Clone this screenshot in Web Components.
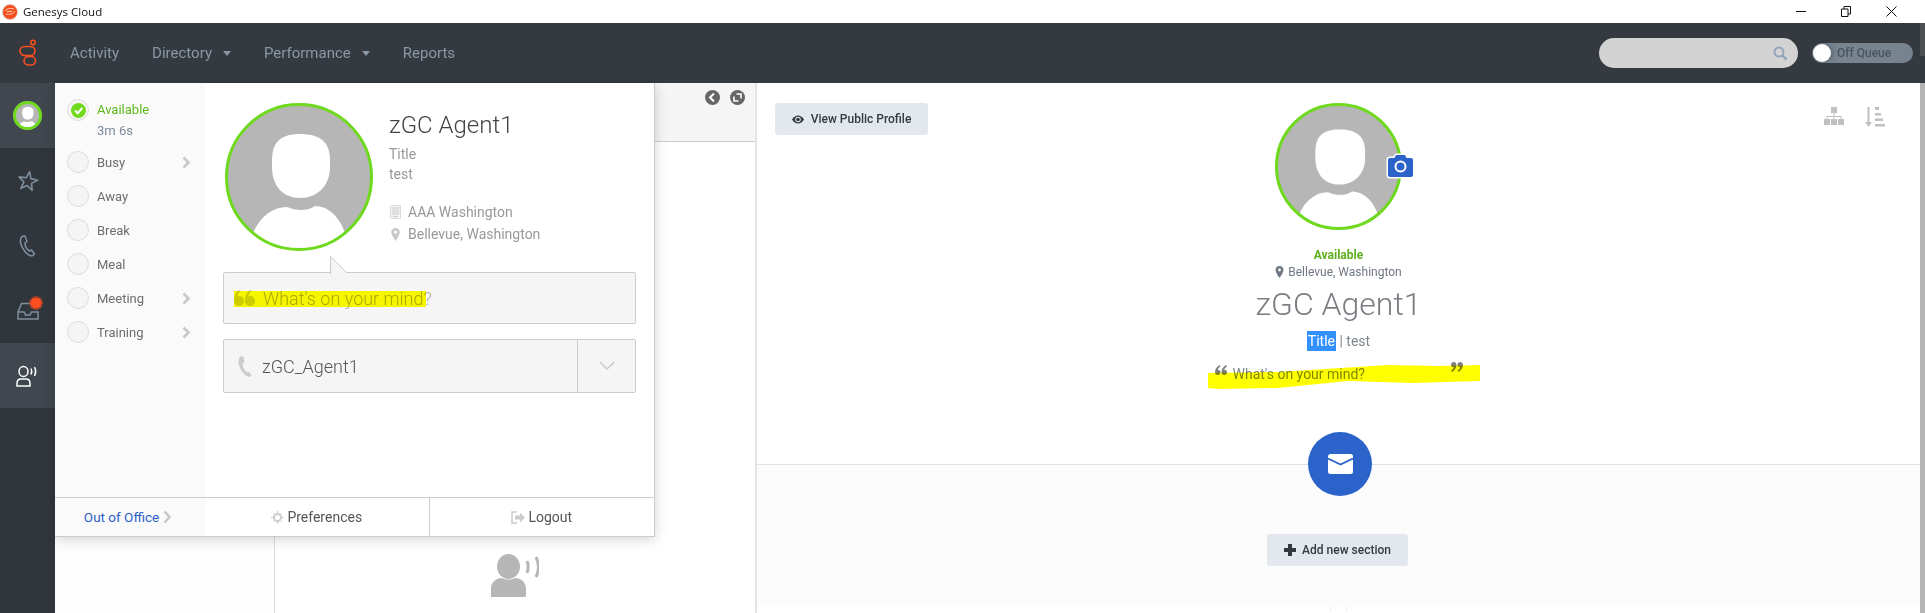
<!DOCTYPE html>
<html>
<head>
<meta charset="utf-8">
<title>Genesys Cloud</title>
<style>
  html, body { margin: 0; height: 613px; overflow: hidden; background: #fff; font-family: Roboto, "Liberation Sans", sans-serif; }
  gc-app { display: block; }
</style>
</head>
<body>
<gc-app></gc-app>
<script>
const HEAD = 'M75 31C95 31 105 39 105 57L105 64C105 83 92 95 75 95C58 95 47 83 47 64L47 57C47 39 56 31 75 31Z';
const BODY = 'M24 150C26 120 44 104 62 104C67 106 71 107 76 107C81 107 85 106 90 103C106 103 122 120 124 150Z';

class GcAvatar extends HTMLElement {
  connectedCallback() {
    const size = this.getAttribute('size') || 148;
    const border = this.getAttribute('border') || 3;
    const id = 'c' + size;
    this.attachShadow({ mode: 'open' }).innerHTML = `
      <style>
        :host { display: block; width: ${size}px; height: ${size}px; position: relative; flex: none; }
        svg { display: block; }
      </style>
      <svg width="${size}" height="${size}" viewBox="0 0 148 148">
        <clipPath id="${id}"><circle cx="74" cy="74" r="72"/></clipPath>
        <circle cx="74" cy="74" r="73" fill="#b6b6b6"/>
        <g clip-path="url(#${id})" fill="#fff"><path d="${HEAD}"/><path d="${BODY}"/></g>
        <circle cx="74" cy="74" r="${74 - border * 148 / size / 2}" fill="none" stroke="#6fd91e" stroke-width="${border * 148 / size}"/>
      </svg>
      <slot></slot>`;
  }
}

class GcTitlebar extends HTMLElement {
  connectedCallback() {
    this.attachShadow({ mode: 'open' }).innerHTML = `
      <style>
        :host { display: flex; align-items: center; height: 23px; background: #fff; padding: 0 28px 0 2px; color: #111;
          font: 11.5px "Open Sans", "Noto Sans", sans-serif; }
        .name { margin-left: 5px; flex: 1; }
        .ctl { display: flex; gap: 35px; align-items: center; }
        svg { display: block; }
      </style>
      <svg width="16" height="16" viewBox="0 0 16 16"><circle cx="8" cy="8" r="7.500" fill="#f4511e" stroke="#ccc" stroke-width=".6"/>
        <path d="M3 7c2-3 7-3 9-2M4 10c3 1 7 0 9-3M5 7.500h5" fill="none" stroke="#ffc9b0" stroke-width="1"/></svg>
      <span class="name">Genesys Cloud</span>
      <div class="ctl">
        <svg width="10" height="11" viewBox="0 0 10 11"><path d="M0 5.500h10" stroke="#111"/></svg>
        <svg width="10" height="11" viewBox="0 0 10 11"><path d="M.5 3h6.500v7.500H.5zM3 3V.5h6.500V8H7" fill="none" stroke="#111"/></svg>
        <svg width="11" height="11" viewBox="0 0 11 11"><path d="M.5.500l10 10M10.500.500l-10 10" stroke="#111"/></svg>
      </div>`;
  }
}

class GcNavbar extends HTMLElement {
  connectedCallback() {
    this.attachShadow({ mode: 'open' }).innerHTML = `
      <style>
        :host { display: flex; align-items: center; height: 60px; background: #343a40; color: #8a97a5; font-size: 15px; }
        .logo { width: 70px; padding-left: 19px; box-sizing: border-box; flex: none; }
        svg { display: block; }
        nav { display: flex; flex: 1; }
        a { display: flex; align-items: center; margin-right: 33px; }
        a i { width: 0; height: 0; margin-left: 11px; border: 4.500px solid transparent; border-top: 5px solid #8a97a5; border-bottom: 0; }
        .search { width: 199px; height: 30px; border-radius: 15px; background: #d3d3d3; display: flex; align-items: center; justify-content: flex-end; padding-right: 10px; box-sizing: border-box; }
        .queue { width: 101px; height: 20px; margin: 0 12px 0 14px; border-radius: 10px; background: #778490; display: flex; align-items: center; color: #4a5460; font-size: 12px; font-weight: 500; }
        .queue b { width: 18px; height: 18px; margin-left: 1px; margin-right: 6px; background: #fff; border-radius: 50%; box-shadow: 2px 0 4px rgba(0,0,0,.25); }
      </style>
      <div class="logo"><svg width="18" height="28" viewBox="0 0 18 28"><g fill="none" stroke="#fc4e1e" stroke-width="1.600">
        <circle cx="14" cy="3.500" r="2.200"/><rect x="1" y="7.500" width="15" height="9" rx="4.500"/><rect x="5" y="17.500" width="11.500" height="8.500" rx="4.250"/></g></svg></div>
      <nav>
        <a>Activity</a>
        <a>Directory<i></i></a>
        <a>Performance<i></i></a>
        <a>Reports</a>
      </nav>
      <div class="search"><svg width="15" height="15" viewBox="0 0 15 15"><circle cx="6" cy="6" r="4.500" fill="none" stroke="#93a5bb" stroke-width="2"/><path d="M9.500 9.500l4 4" stroke="#93a5bb" stroke-width="2.500"/></svg></div>
      <div class="queue"><b></b>Off Queue</div>`;
  }
}

class GcRail extends HTMLElement {
  connectedCallback() {
    const s = 'fill="none" stroke="#7f8fa0" stroke-width="1.500"';
    this.attachShadow({ mode: 'open' }).innerHTML = `
      <style>
        :host { display: flex; flex-direction: column; width: 55px; flex: none; background: #30363b; }
        div { height: 65px; display: flex; align-items: center; justify-content: center; position: relative; }
        .on { background: #41474f; }
        svg { display: block; }
        .dot { position: absolute; left: 29px; top: 18px; }
      </style>
      <div class="on"><gc-avatar size="29" border="3"></gc-avatar></div>
      <div><svg width="22" height="22" viewBox="0 0 21 21"><path transform="rotate(10 10.500 10.500)" d="M10.500 1.500l2.300 6.300 6.700.300-5.300 4.100 1.800 6.400-5.500-3.700-5.500 3.700 1.800-6.400L1.500 8.100l6.700-.300z" ${s} stroke-linejoin="round"/></svg></div>
      <div><svg width="17" height="22" viewBox="0 0 17 22"><path d="M3 1.500L6 1l2 5.500-2 1.500c0 3 2 6.500 4.500 8l2-1 3 4-2.500 2C8 21 2.500 13 1.500 7.500 1.200 5 1.500 3 3 1.500z" ${s} stroke-linejoin="round"/></svg></div>
      <div><svg width="22" height="18" viewBox="0 0 22 18"><path d="M1 10L4.500 1.500h9M1 10v7h20v-7h-6.500l-1.500 3H8.500L7 10H1z" ${s}/></svg>
        <svg class="dot" width="14" height="14" viewBox="0 0 14 14"><circle cx="7" cy="7" r="5.500" fill="#fc4e1e"/><circle cx="7" cy="7" r="6.200" fill="none" stroke="#fc4e1e" stroke-width="1.500" stroke-dasharray="1 1"/></svg></div>
      <div class="on"><svg width="23" height="22" viewBox="0 0 23 22"><g fill="none" stroke="#fff" stroke-width="1.500">
        <ellipse cx="7.500" cy="6.500" rx="4.500" ry="5"/><path d="M1 21v-2.500c0-3 2-4.500 4-4.500h5c2 0 4 1.500 4 4.500V21z"/><path d="M15 3.500c1 2 1 4 0 6M18.500 2c1.500 3 1.500 6 0 9"/></g></svg></div>`;
  }
}

class GcStatusMenu extends HTMLElement {
  connectedCallback() {
    const rows = [['Busy', 1], ['Away'], ['Break'], ['Meal'], ['Meeting', 1], ['Training', 1]];
    const chev = '<svg class="chev" width="9" height="13" viewBox="0 0 9 13"><path d="M1.500 1.500l5 5-5 5" fill="none" stroke="#c8c8c8" stroke-width="2.600"/></svg>';
    this.attachShadow({ mode: 'open' }).innerHTML = `
      <style>
        :host { display: block; padding: 10px 14px 0 12px; font-size: 13px; color: #6d6d6d; }
        .row { display: flex; align-items: center; height: 34px; }
        .first { height: 52px; align-items: flex-start; padding-top: 6px; box-sizing: border-box; }
        .dot { width: 20px; height: 20px; border: 1px solid #ddd; border-radius: 50%; background: #f5f5f5; margin-right: 8px; flex: none; display: flex; align-items: center; justify-content: center; }
        .label { flex: 1; }
        .avail { color: #5fb81c; line-height: 22px; }
        .time { color: #7d8a9c; line-height: 19px; margin-top: 0; }
        svg { display: block; }
      </style>
      <div class="row first">
        <span class="dot"><svg width="15" height="15" viewBox="0 0 15 15"><circle cx="7.500" cy="7.500" r="7.500" fill="#6fd91e"/><path d="M4 7.500l2.700 2.700L11.200 5" fill="none" stroke="#fff" stroke-width="2"/></svg></span>
        <div class="label"><div class="avail">Available</div><div class="time">3m 6s</div></div>
      </div>
      ${rows.map(r => `<div class="row"><span class="dot"></span><span class="label">${r[0]}</span>${r[1] ? chev : ''}</div>`).join('')}`;
  }
}

class GcPopover extends HTMLElement {
  connectedCallback() {
    const mark = '#c8c8c8';
    this.attachShadow({ mode: 'open' }).innerHTML = `
      <style>
        :host { position: absolute; left: 55px; top: 83px; width: 600px; height: 454px; background: #fff; display: grid;
          grid-template-columns: 150px 1fr 1fr; grid-template-rows: 414px 1fr; box-sizing: border-box;
          border-right: 1px solid #ccc; border-bottom: 1px solid #ccc; box-shadow: 0 2px 12px rgba(0,0,0,.18); }
        gc-status-menu { background: #fafafa; }
        .main { grid-column: 2 / 4; padding: 20px 18px 0 18px; position: relative; }
        .top { display: flex; padding-left: 2px; }
        .info { margin-left: 16px; color: #999; font-size: 14px; line-height: 20px; }
        .name { font-size: 24px; font-weight: 300; color: #444; line-height: 30px; margin-bottom: 4px; margin-top: 7px; }
        .place { display: flex; align-items: center; line-height: 22px; }
        .place svg { width: 11px; margin-right: 7px; margin-left: 1px; }
        .spaced { margin-top: 17px; }
        .box { background: #f5f5f5; border: 1px solid #ccc; border-radius: 2px; box-sizing: border-box; display: flex; align-items: center; font-weight: 300; font-size: 18px; position: relative; }
        .mood { height: 52px; margin-top: 21px; padding-left: 10px; color: #aaa; }
        .mood svg { margin-right: 8px; }
        .tail { position: absolute; left: 106px; top: -17px; display: block; }
        .mark { position: absolute; left: 10px; top: 18px; width: 192px; height: 16px; background: #ff0; mix-blend-mode: multiply; }
        .station { height: 54px; margin-top: 15px; padding-left: 14px; color: #555; }
        .station svg { margin-right: 10px; }
        .station span { flex: 1; }
        .drop { width: 57px; height: 100%; border-left: 1px solid #ccc; display: flex; align-items: center; justify-content: center; }
        .drop svg { margin: 0; }
        .foot { display: flex; align-items: center; justify-content: center; border-top: 1px solid #ccc; font-size: 14px; color: #555; }
        .foot svg { margin-right: 3px; }
        .ooo { background: #fafafa; color: #2a60c8; padding-right: 4px; font-size: 13.500px; }
        .ooo svg { margin: 0 0 0 4px; }
        .pref { border-right: 1px solid #ccc; }
      </style>
      <gc-status-menu></gc-status-menu>
      <div class="main">
        <div class="top">
          <gc-avatar size="148" border="3"></gc-avatar>
          <div class="info">
            <div class="name">zGC Agent1</div>
            <div>Title</div>
            <div>test</div>
            <div class="place spaced"><svg height="14" viewBox="0 0 11 14"><path d="M.5.500h10v13H.5z" fill="#f2f2f2" stroke="#ddd"/><path d="M2 3h7M2 5h7M2 7h7M2 9h7M3 11.500h5" stroke="#ccc"/></svg>AAA Washington</div>
            <div class="place"><svg height="13" viewBox="0 0 11 14"><path d="M5.500 0C2.500 0 1 2.200 1 4.500 1 7.500 5.500 14 5.500 14S10 7.500 10 4.500C10 2.200 8.500 0 5.500 0z" fill="${mark}"/><circle cx="5.500" cy="4.500" r="1.600" fill="#fff"/></svg>Bellevue, Washington</div>
          </div>
        </div>
        <div class="box mood">
          <svg class="tail" width="18" height="18" viewBox="0 0 18 18"><path d="M.5 18V.5L17 17" fill="#f5f5f5" stroke="#ccc"/><path d="M1 17h16v1H1z" fill="#f5f5f5"/></svg>
          <svg width="21" height="16" viewBox="0 0 21 16"><path d="M5 0C2 2 0 5 0 10.500 0 13.500 2 16 5 16s5-2 5-5-2-5-5-5c-.5 0-1 0-1.500.2C3.800 4 5 2 7 1zM16 0c-3 2-5 5-5 10.500 0 3 2 5.500 5 5.500s5-2 5-5-2-5-5-5c-.5 0-1 0-1.500.2.300-2.200 1.500-4.200 3.500-5.200z" fill="#ccc"/></svg>
          What's on your mind?
          <div class="mark"></div>
        </div>
        <div class="box station">
          <svg width="14" height="21" viewBox="0 0 14 21"><path d="M3 0l2.500 1 1 5-2 1.500c0 3 2 7 4 8.500l2-.5 3 3.500-2 2C5 20 .5 11 .5 5.500.5 3 1.500 1 3 0z" fill="#ccc"/></svg>
          <span>zGC_Agent1</span>
          <div class="drop"><svg width="16" height="10" viewBox="0 0 16 10"><path d="M.8 1l7.200 7 7.200-7" fill="none" stroke="#c8c8c8" stroke-width="1.500"/></svg></div>
        </div>
      </div>
      <div class="foot ooo">Out of Office<svg width="9" height="14" viewBox="0 0 9 14"><path d="M1.500 1.500l5 5.500-5 5.500" fill="none" stroke="#c8c8c8" stroke-width="2.600"/></svg></div>
      <div class="foot pref"><svg width="13" height="13" viewBox="0 0 13 13"><circle cx="6.500" cy="6.500" r="3.500" fill="none" stroke="#ccc" stroke-width="2"/><path d="M6.500 0v13M0 6.500h13M2 2l9 9M11 2l-9 9" stroke="#ccc" stroke-width="1" stroke-dasharray="2 9 2 0"/></svg>Preferences</div>
      <div class="foot"><svg width="14" height="13" viewBox="0 0 14 13"><path d="M6 1H1v11h5" fill="none" stroke="#ccc" stroke-width="1.500"/><path d="M4 4.500h5V1.500l5 5-5 5v-3H4z" fill="#ccc"/></svg>Logout</div>`;
  }
}

class GcMiddleColumn extends HTMLElement {
  connectedCallback() {
    this.attachShadow({ mode: 'open' }).innerHTML = `
      <style>
        :host { display: flex; flex-direction: column; align-items: center; width: 483px; flex: none; box-sizing: border-box; background: #fff;
          border-left: 1px solid #ddd; border-right: 2px solid #e4e4e4; }
        .head { align-self: stretch; height: 59px; flex: none; box-sizing: border-box; background: #f5f5f5; border-bottom: 1px solid #ccc; display: flex; justify-content: flex-end; gap: 10px; padding: 7px 10px 0 0; }
        svg { display: block; flex: none; }
        .talk { margin-top: 412px; }
      </style>
      <div class="head">
        <svg width="15" height="15" viewBox="0 0 15 15"><circle cx="7.500" cy="7.500" r="7.500" fill="#666"/><path d="M9 3.500l-4 4 4 4" fill="none" stroke="#fff" stroke-width="2"/></svg>
        <svg width="15" height="15" viewBox="0 0 15 15"><circle cx="7.500" cy="7.500" r="7.500" fill="#666"/><path d="M6.500 4H11v4.500M8.500 11H4V6.500" fill="none" stroke="#fff" stroke-width="1.600"/></svg>
      </div>
      <svg class="talk" width="48" height="43" viewBox="0 0 48 43" fill="#b6b6b6"><ellipse cx="17.500" cy="12.500" rx="11.500" ry="12.500"/><path d="M0 43V35c0-7 5-11 11-11 4 2 10 2 13 0 6 0 11 4 11 11v7l-1 1z"/>
        <path d="M36 7c1.500 4 1.500 8 0 12M45 3c3 6 3 14 0 20" fill="none" stroke="#b6b6b6" stroke-width="3"/></svg>`;
  }
}

class GcProfilePage extends HTMLElement {
  connectedCallback() {
    const q = 'M4.500 0C2 1.500 0 4 0 7c0 2 1.200 3 2.700 3S5.500 9 5.500 7.300 4.300 4.800 2.800 4.800C3 3.500 4 2.200 5.500 1.500zM11 0C8.500 1.500 6.500 4 6.500 7c0 2 1.200 3 2.700 3s2.800-1 2.800-2.700-1.200-2.500-2.700-2.500c.2-1.300 1.200-2.600 2.700-3.300z';
    const cam = 'M4 6h4.500l1.500-3h9l1.500 3H25a2 2 0 0 1 2 2v15a2 2 0 0 1-2 2H4a2 2 0 0 1-2-2V8a2 2 0 0 1 2-2z';
    this.attachShadow({ mode: 'open' }).innerHTML = `
      <style>
        :host { display: flex; flex-direction: column; flex: 1; background: #fff; min-width: 0; }
        svg { display: block; }
        .top { height: 382px; box-sizing: border-box; padding: 20px 18px 0; display: grid; grid-template-columns: 1fr auto 1fr; border-bottom: 1px solid #e2e2e2; flex: none; }
        .btn { display: inline-flex; align-items: center; justify-content: center; height: 32px; background: #e3e8ef; border-radius: 3px; font-size: 12px; font-weight: 500; color: #343a40; }
        .view { width: 153px; gap: 7px; justify-self: start; }
        .tools { justify-self: end; display: flex; gap: 21px; padding: 4px 17px 0 0; align-items: flex-start; }
        .center { display: flex; flex-direction: column; align-items: center; position: relative; }
        .cam { position: absolute; left: 111px; top: 49px; display: block; }
        .photo { position: relative; }
        .status { margin-top: 17px; color: #5fb01e; font-size: 12px; font-weight: 700; line-height: 16px; }
        .loc { display: flex; align-items: center; gap: 4px; font-size: 12px; line-height: 18px; color: #6f7782; }
        .name { margin-top: 3px; font-size: 32px; font-weight: 300; line-height: 40px; color: #7a7d82; }
        .role { margin-top: 7px; font-size: 14px; line-height: 20px; color: #7f8790; }
        .role mark { display: inline-block; padding: 0 1px; background: #3390ff; color: #fff; }
        .mood { margin-top: 13px; width: 248px; position: relative; display: flex; font-size: 14px; line-height: 20px; color: #7f8790; gap: 6px; }
        .mood .text { flex: 1; }
        .mood .open { margin-top: 1px; }
        .mood .close { margin-top: -2px; }
        .brush { position: absolute; left: -7px; top: 1px; mix-blend-mode: multiply; }
        .low { flex: 1; display: flex; flex-direction: column; align-items: center; background: #fcfcfd; }
        .mail { width: 64px; height: 64px; margin-top: -33px; margin-left: 3px; border-radius: 50%; background: #2b63cb; display: flex; align-items: center; justify-content: center; }
        .add { width: 141px; margin-top: 38px; margin-right: 2px; gap: 6px; }
        .strip { margin-top: 40px; align-self: stretch; flex: 1; background: #fff; display: flex; justify-content: center; }
        .strip i { width: 15px; height: 6px; border: solid #f0f0f0; border-width: 0 1px; }
      </style>
      <div class="top">
        <div class="btn view"><svg width="12" height="9" viewBox="0 0 12 9"><path d="M0 4.500C2 1.500 4 .5 6 .5s4 1 6 4c-2 3-4 4-6 4s-4-1-6-4z" fill="#343a40"/><circle cx="6" cy="4.500" r="2.800" fill="#e3e8ef"/><circle cx="6" cy="4.500" r="1.800" fill="#343a40"/></svg>View Public Profile</div>
        <div class="center">
          <div class="photo"><gc-avatar size="127" border="3"></gc-avatar>
            <svg class="cam" width="29" height="27" viewBox="0 0 29 27"><path d="${cam}" fill="#fff" stroke="#fff" stroke-width="3" stroke-linejoin="round"/><path d="${cam}" fill="#2b63cb"/><circle cx="14.500" cy="14.500" r="5" fill="#2b63cb" stroke="#fff" stroke-width="2"/></svg>
          </div>
          <div class="status">Available</div>
          <div class="loc"><svg width="9" height="12" viewBox="0 0 9 12"><path d="M4.500 0C2 0 .5 1.800.5 4c0 2.600 4 8 4 8s4-5.400 4-8C8.500 1.800 7 0 4.500 0z" fill="#6f7782"/><circle cx="4.500" cy="4" r="1.400" fill="#fff"/></svg>Bellevue, Washington</div>
          <div class="name">zGC Agent1</div>
          <div class="role"><mark>Title</mark> | test</div>
          <div class="mood">
            <svg class="open" width="12" height="10" viewBox="0 0 12 10"><path d="${q}" fill="#808080"/></svg>
            <span class="text">What's on your mind?</span>
            <svg class="close" width="12" height="10" viewBox="0 0 12 10"><path d="${q}" fill="#808080" transform="rotate(180 6 5)"/></svg>
            <svg class="brush" width="272" height="25" viewBox="0 0 272 25"><path d="M0 8L70 7 180 0 230 1 272 0 272 16 205 18 140 16 70 23 10 24 0 23Z" fill="#ff0"/></svg>
          </div>
        </div>
        <div class="tools">
          <svg width="20" height="18" viewBox="0 0 20 18" fill="#c0c0c0"><rect x="7" y="0" width="6" height="6"/><path d="M9.500 6h1v3h7v3h-1v-2h-6v2h-1v-2h-6v2h-1V9h7z"/><rect x="0" y="12" width="6" height="6"/><rect x="7" y="12" width="6" height="6"/><rect x="14" y="12" width="6" height="6"/></svg>
          <svg width="20" height="20" viewBox="0 0 20 20" fill="#c0c0c0"><path d="M2.500 0h2v15H7l-3.500 5L0 15h2.500z"/><rect x="10" y="0" width="4" height="3"/><rect x="10" y="6" width="6" height="2.500"/><rect x="10" y="11.500" width="8" height="2.500"/><rect x="10" y="17" width="10" height="2.500"/></svg>
        </div>
      </div>
      <div class="low">
        <div class="mail"><svg width="25" height="20" viewBox="0 0 25 20"><rect width="25" height="20" rx="2.500" fill="#fff"/><path d="M0 4.500l12.500 6 12.500-6" fill="none" stroke="#2b63cb" stroke-width="1.800"/></svg></div>
        <div class="btn add"><svg width="12" height="12" viewBox="0 0 12 12"><path d="M4 0h4v4h4v4H8v4H4V8H0V4h4z" fill="#343a40"/></svg>Add new section</div>
        <div class="strip"><i></i></div>
      </div>`;
  }
}

class GcApp extends HTMLElement {
  connectedCallback() {
    this.attachShadow({ mode: 'open' }).innerHTML = `
      <style>
        :host { display: block; height: 613px; position: relative; overflow: hidden; }
        .body { display: flex; height: 530px; }
        .side { width: 219px; flex: none; background: #fdfdfd; }
        .scroll { width: 5px; flex: none; background: #b4b4b4; }
        .thumb { position: absolute; right: 0; top: 23px; width: 5px; height: 33px; background: #4d4f52; }
      </style>
      <gc-titlebar></gc-titlebar>
      <gc-navbar></gc-navbar>
      <div class="body">
        <gc-rail></gc-rail>
        <div class="side"></div>
        <gc-middle-column></gc-middle-column>
        <gc-profile-page></gc-profile-page>
        <div class="scroll"></div>
      </div>
      <div class="thumb"></div>
      <gc-popover></gc-popover>`;
  }
}

customElements.define('gc-avatar', GcAvatar);
customElements.define('gc-titlebar', GcTitlebar);
customElements.define('gc-navbar', GcNavbar);
customElements.define('gc-rail', GcRail);
customElements.define('gc-status-menu', GcStatusMenu);
customElements.define('gc-popover', GcPopover);
customElements.define('gc-middle-column', GcMiddleColumn);
customElements.define('gc-profile-page', GcProfilePage);
customElements.define('gc-app', GcApp);
</script>
</body>
</html>
